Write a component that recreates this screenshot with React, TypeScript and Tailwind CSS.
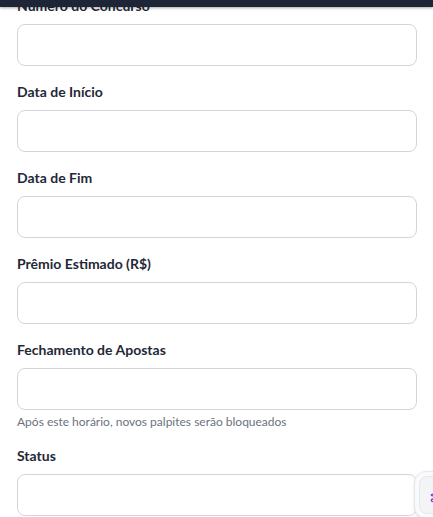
import { Sparkles } from "lucide-react";

const fields = [
  { label: "Número do Concurso" },
  { label: "Data de Início" },
  { label: "Data de Fim" },
  { label: "Prêmio Estimado (R$)" },
  { label: "Fechamento de Apostas", hint: "Após este horário, novos palpites serão bloqueados" },
  { label: "Status" },
];

export default function App() {
  return (
    <div className="relative min-h-screen bg-white font-['Lato',sans-serif] text-[#1f2937]">
      {/* barra do topo */}
      <div className="fixed left-0 right-0 top-0 z-10 h-[7px] bg-[#1e2536] shadow-[0_1px_3px_rgba(0,0,0,0.35)]" />

      <div className="-mt-[4px] flex flex-col gap-4 pl-[17px] pr-[16px]">
        {fields.map((f) => (
          <div key={f.label} className="flex flex-col">
            <label className="mb-2 text-sm leading-5 font-bold text-[#1f2937]">{f.label}</label>
            <input className="h-[42px] w-full rounded-lg border border-[#d1d5db] bg-white px-3 outline-none" />
            {f.hint && <p className="mt-1 text-xs leading-4 text-[#6b7280]">{f.hint}</p>}
          </div>
        ))}
      </div>

      {/* botão flutuante */}
      <button className="fixed left-[414px] top-[471px] flex h-[48px] w-[48px] items-center justify-center rounded-xl border border-[#e5e7eb] bg-[#f9fafb] p-1 shadow-sm">
        <span className="flex h-full w-full items-center justify-center rounded-lg border border-[#e5e7eb] bg-[#f3f4f6]">
          <Sparkles className="h-4 w-4 text-[#9333ea]" />
        </span>
      </button>
    </div>
  );
}
